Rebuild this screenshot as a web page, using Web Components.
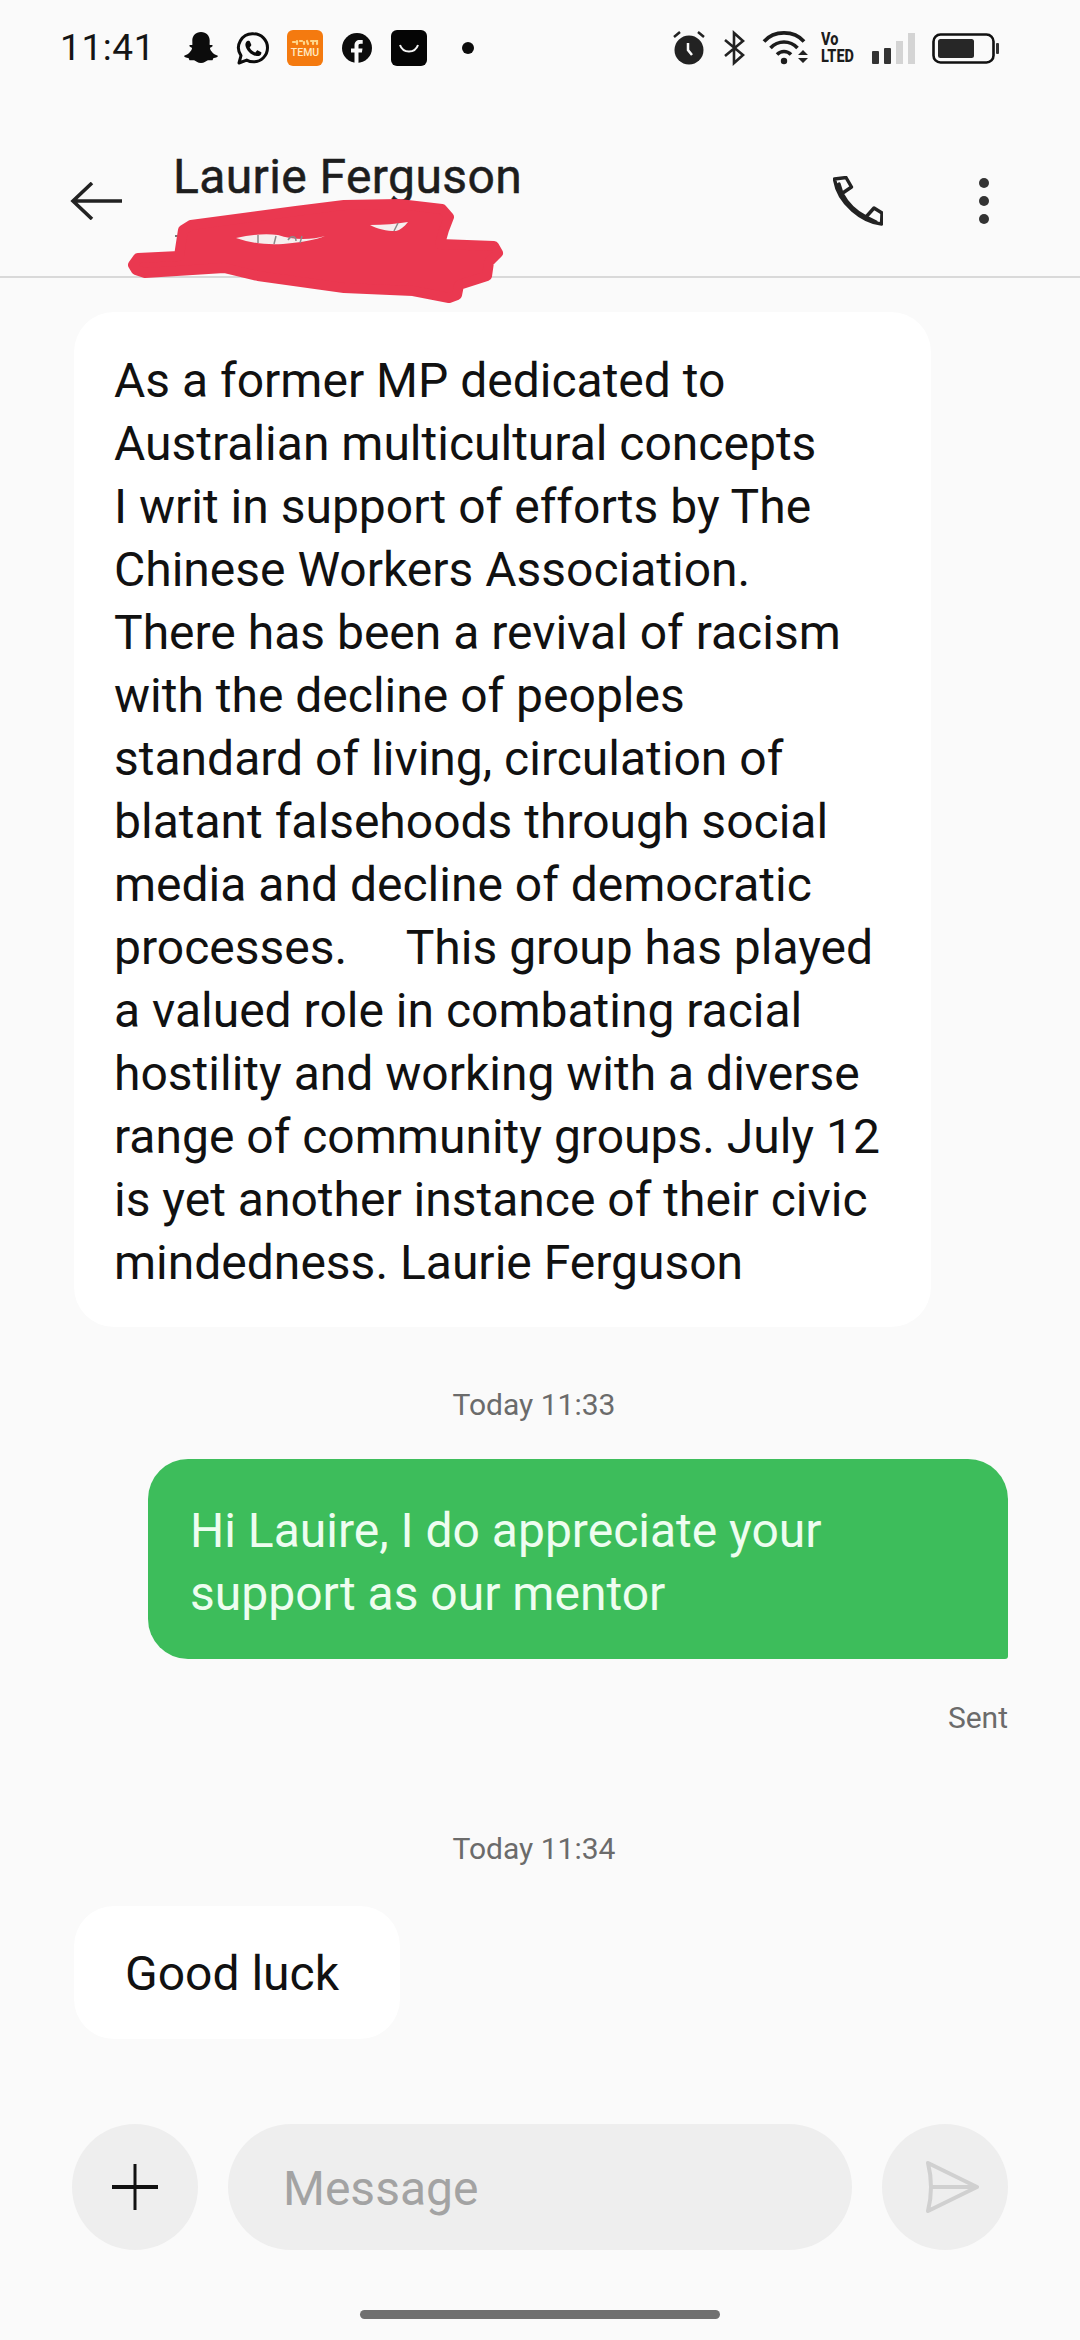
<!DOCTYPE html>
<html lang="en"><head><meta charset="utf-8"><title>Messages</title>
<style>
html,body{margin:0;padding:0;background:#fafafa}
body{font-family:Roboto,"Noto Sans",sans-serif;width:1080px;height:2340px;overflow:hidden}
</style></head><body>
<chat-app>
  <status-bar slot="status"></status-bar>
  <chat-header slot="header" name="Laurie Ferguson"></chat-header>
  <chat-bubble kind="in" style="--pt:37px;--pb:33px;--pl:40px;--w:857px;margin-top:34px">As a former MP dedicated to<br>Australian multicultural concepts<br>I writ in support of efforts by The<br>Chinese Workers Association.<br>There has been a revival of racism<br>with the decline of peoples<br>standard of living, circulation of<br>blatant falsehoods through social<br>media and decline of democratic<br>processes. &nbsp; &nbsp; This group has played<br>a valued role in combating racial<br>hostility and working with a diverse<br>range of community groups. July 12<br>is yet another instance of their civic<br>mindedness. Laurie Ferguson</chat-bubble>
  <chat-time style="margin-top:60px">Today 11:33</chat-time>
  <chat-bubble kind="out" style="--pt:40px;--pb:34px;--pl:42px;--w:860px;margin-top:36px">Hi Lauire, I do appreciate your<br>support as our mentor</chat-bubble>
  <chat-sent>Sent</chat-sent>
  <chat-time style="margin-top:95px">Today 11:34</chat-time>
  <chat-bubble kind="in" style="--pt:36px;--pb:34px;--pl:51px;--w:326px;margin-top:39px">Good luck</chat-bubble>
  <chat-composer slot="composer" placeholder="Message"></chat-composer>
  <home-bar slot="home"></home-bar>
</chat-app>
<script>
function def(name, html){
  customElements.define(name, class extends HTMLElement{
    connectedCallback(){
      if(this.shadowRoot) return;
      const r=this.attachShadow({mode:'open'});
      r.innerHTML=typeof html==='function'?html(this):html;
    }
  });
}
def('chat-app',`<style>
:host{display:flex;flex-direction:column;width:1080px;height:2340px;background:#fafafa;color:#111}
main{flex:1;display:flex;flex-direction:column;min-height:0}
</style><slot name="status"></slot><slot name="header"></slot><main><slot></slot></main><slot name="composer"></slot><slot name="home"></slot>`);

def('status-bar',`<style>
:host{display:flex;align-items:center;height:96px;padding-left:60px;box-sizing:border-box;color:#111;flex:none}
.t{font:400 37px/44px Roboto,sans-serif;letter-spacing:.6px;width:124px;flex:none;color:#151515}
svg{display:block;flex:none;overflow:visible}
.sp{margin-left:auto}
.vo{display:block;width:36px;height:25px;margin-right:15px;flex:none;color:#1c1c1c;font:800 14.500px/12.500px Roboto,sans-serif;transform:scaleY(1.3);transform-origin:50% 50%}
</style>
<span class="t">11:41</span>
<svg width="34" height="32" viewBox="0 0 34 32" style="margin-right:19px"><path fill="#0c0c0c" d="M17 0c5.400 0 8.700 3.700 8.700 8.500l-.1 4.300c1 .6 2.400-.3 3 .6.400 1-1.500 1.800-2.700 2.400.5 3.800 4.400 6.800 7.400 7.800.8.300.9 1-.2 1.500-1.200.6-3 .8-3.800 1.200-.5.500-.2 1.700-1 2-1.500.2-3.300-.4-5 .1-1.600.6-3 2.600-6.300 2.600s-4.700-2-6.300-2.600c-1.700-.5-3.500.1-5-.1-.8-.3-.5-1.500-1-2-.8-.4-2.600-.6-3.800-1.200-1.100-.5-1-1.200-.2-1.500 3-1 6.900-4 7.400-7.800-1.200-.6-3.100-1.400-2.700-2.400.6-.9 2-.000 3-.6l-.1-4.300C8.300 3.700 11.600 0 17 0z"/></svg>
<svg width="32" height="33" viewBox="0 0 32 33" style="margin-right:18px"><path fill="none" stroke="#0c0c0c" stroke-width="3" stroke-linejoin="round" d="M16.500 1.800a14 14 0 0 1 0 28c-2.500 0-4.800-.6-6.800-1.700L2 31l2-7.300A14 14 0 0 1 16.500 1.800z"/><path fill="#0c0c0c" d="M11.400 8.700c.8 0 1.200.1 1.500.9l1.300 3c.2.500 0 1-.3 1.400l-1 1.100c-.2.300-.2.500 0 .8 1.200 2 2.800 3.400 4.800 4.400.3.200.6.100.8-.1l1.300-1.500c.3-.4.700-.4 1.100-.2l2.900 1.400c.5.200.7.500.6 1-.2 2.300-2.400 3.400-4.500 3.200-5.600-.7-10.800-5.800-11.500-10.900-.2-1.900.8-3.900 2.500-4.500z"/></svg>
<svg width="36" height="36" viewBox="0 0 36 36" style="margin-right:19px"><rect width="36" height="36" rx="6" fill="#f47a0f"/><path stroke="#ffd68a" stroke-width="2.200" stroke-linecap="round" d="M6 12h2M10 11v3M13 11h2M17 12v2M20 11l1 3M24 11h2v3M28 11h2v3"/><text x="18" y="26" text-anchor="middle" font-family="Roboto,sans-serif" font-size="10.500" font-weight="500" fill="#ffe9c4">TEMU</text></svg>
<svg width="30" height="30" viewBox="0 0 30 30" style="margin-right:19px"><circle cx="15" cy="15" r="15" fill="#0c0c0c"/><path fill="#fafafa" d="M12.500 30V19.400H9v-4h3.500v-3.100c0-3.500 2.100-5.400 5.200-5.400 1.500 0 2.700.2 3 .2v3.600h-2.100c-1.700 0-2.100.8-2.100 2v2.700h4l-.6 4h-3.400V30z"/></svg>
<svg width="36" height="36" viewBox="0 0 36 36" style="margin-right:35px"><rect width="36" height="36" rx="6" fill="#050505"/><path d="M9 15a9.500 9.500 0 0 0 18 0" fill="none" stroke="#f4f4f4" stroke-width="2"/></svg>
<svg width="12" height="12" viewBox="0 0 12 12"><circle cx="6" cy="6" r="6" fill="#0c0c0c"/></svg>
<span class="sp"></span>
<svg width="32" height="34" viewBox="0 0 32 34" style="margin-right:18px"><circle cx="16" cy="19" r="14.500" fill="#222"/><path d="M1 6l6-5M31 6l-6-5" stroke="#222" stroke-width="2.500"/><path d="M15 12v7l4 5" fill="none" stroke="#fafafa" stroke-width="2.500"/></svg>
<svg width="22" height="34" viewBox="0 0 22 34" style="margin-right:18px"><path fill="none" stroke="#222" stroke-width="2.600" d="M2 9l18 15-9 8V2l9 8L2 25"/></svg>
<svg width="45" height="34" viewBox="0 0 45 34" style="margin-right:13px"><g fill="none" stroke="#1c1c1c" stroke-width="3.600"><path d="M1 10.500C11-1 31-1 41 10.500"/><path d="M7.500 17C15 9 27 9 34.500 17"/><path d="M14 23.500c4-4 10-4 14 0"/></g><circle cx="21" cy="30" r="3.200" fill="#1c1c1c"/><path fill="#222" d="M40 19l5 5H35zM35 27h10l-5 5z"/></svg>
<span class="vo">Vo LTED</span>
<svg width="44" height="31" viewBox="0 0 44 31" style="margin-right:16px"><rect x="0" y="18" width="7" height="13" rx="1" fill="#333"/><rect x="12" y="15" width="7" height="16" rx="1" fill="#333"/><rect x="24" y="8" width="7" height="23" fill="#d4d4d4"/><rect x="36" y="0" width="7" height="31" fill="#d4d4d4"/></svg>
<svg width="67" height="31" viewBox="0 0 67 31" style="margin-right:81px"><rect x="1.500" y="1.500" width="60" height="28" rx="7" fill="none" stroke="#111" stroke-width="2.600"/><rect x="6" y="6" width="36" height="19" rx="2.500" fill="#272727"/><rect x="64" y="10" width="3" height="11" rx="1" fill="#333"/></svg>`);

def('chat-header',h=>`<style>
:host{display:flex;position:relative;flex:none;height:182px;box-sizing:border-box;border-bottom:2px solid #d9d9d9;padding:30px 91px 0 70px;align-items:center;color:#1c1c1c}
.title{align-self:flex-start;margin:23px 0 0 51px;font:400 48px/56px Roboto,sans-serif;letter-spacing:.4px;-webkit-text-stroke:.5px #1d1d1d;white-space:nowrap;color:#1d1d1d}
.acts{margin-left:auto;display:flex;align-items:center;gap:96px}
svg{display:block;flex:none}
.scribble{position:absolute;left:0;top:0;pointer-events:none}
</style>
<svg width="52" height="38" viewBox="0 0 52 38"><path d="M52 19H3M22 1L3 19l19 18" fill="none" stroke="#222" stroke-width="3.600"/></svg>
<span class="title">${h.getAttribute('name')}</span>
<span class="acts">
<svg width="50" height="50" viewBox="0 0 50 50"><path fill="none" stroke="#222" stroke-width="3.400" stroke-linejoin="round" stroke-linecap="round" d="M1.500 3 13 1.500 18.500 11 9 17.500C14 27 23 36 33 41l8-9 8 5-.5 11C30 46 5 28 1.500 3zM9 17.500 6 8M33 41l10 5"/></svg>
<svg width="10" height="46" viewBox="0 0 10 46"><circle cx="5" cy="5" r="5" fill="#333"/><circle cx="5" cy="23" r="5" fill="#333"/><circle cx="5" cy="41" r="5" fill="#333"/></svg>
</span>
<svg class="scribble" width="520" height="210" viewBox="0 0 520 210">
<path d="M175 140h6" stroke="#777" stroke-width="2"/>
<polygon fill="#ea3850" stroke="#ea3850" stroke-width="10" stroke-linejoin="round" points="133,169 138,162 179,160 183,134 191,129 296,115 344,109 399,108 442,113 449,121 444,134 440,148 494,150 498,157 489,166 487,180 459,189 457,199 449,202 413,195 344,192 258,180 224,172 145,177 136,174"/>
<path fill="#f6eeee" d="M236 142c14-3 28-5 42-3 14 5 34 5 47 1-10 4-22 6-42 8-18 1-32-1-47-6zM370 129c14 0 26-1 38-3-4 5-8 8-12 9-10 0-18-2-26-6z"/>
<path fill="none" stroke="#8a8a8a" stroke-width="1.500" d="M258 139v8M276 140l-2 8M288 144c3-5 8-4 8 1M302 140l-2 7M398 127l-4 8"/>
</svg>`);

def('chat-bubble',h=>{const out=h.getAttribute('kind')==='out';return `<style>
:host{display:block;width:var(--w);box-sizing:border-box;flex:none;${out?'margin-left:auto;margin-right:72px;':'margin-left:74px;'}
background:${out?'#3dbd5b':'#fff'};color:${out?'#eefdf0':'#111'};
border-radius:${out?'40px 40px 3px 40px':'40px'};
padding:var(--pt) 20px var(--pb) var(--pl);font:400 48px/63px Roboto,sans-serif;white-space:nowrap}
</style><slot></slot>`});

def('chat-time',`<style>
:host{display:block;flex:none;text-align:center;width:1068px;font:400 30px/36px Roboto,sans-serif;color:#6b6b6b}
</style><slot></slot>`);

def('chat-sent',`<style>
:host{display:block;flex:none;text-align:right;margin:41px 72px 0 0;font:400 30px/36px Roboto,sans-serif;color:#6b6b6b}
</style><slot></slot>`);

def('chat-composer',h=>`<style>
:host{display:flex;flex:none;padding:0 72px 60px 72px;gap:30px;height:186px;box-sizing:border-box;align-items:flex-start}
.c{width:126px;height:126px;border-radius:50%;background:#eeeeee;flex:none;display:flex;align-items:center;justify-content:center}
.f{flex:1;height:126px;border-radius:63px;background:#eeeeee;display:flex;align-items:center;padding:3px 0 0 55px;box-sizing:border-box;font:400 48px/56px Roboto,sans-serif;color:#a3a3a3}
svg{display:block}
</style>
<span class="c"><svg width="46" height="46" viewBox="0 0 46 46"><path d="M23 0v46" stroke="#111" stroke-width="3"/><path d="M0 23h46" stroke="#111" stroke-width="4"/></svg></span>
<span class="f">${h.getAttribute('placeholder')}</span>
<span class="c"><svg width="54" height="52" viewBox="0 0 54 52" style="margin-left:14px"><path fill="none" stroke="#d0d0d0" stroke-width="4" stroke-linejoin="round" d="M3 2l49 24L3 50c2-8 3-16 3-24S5 10 3 2zM6 26h46"/></svg></span>`);

def('home-bar',`<style>
:host{display:flex;flex:none;justify-content:center;height:30px}
i{display:block;width:360px;height:9px;border-radius:5px;background:#707070}
</style><i></i>`);
</script>
</body></html>
